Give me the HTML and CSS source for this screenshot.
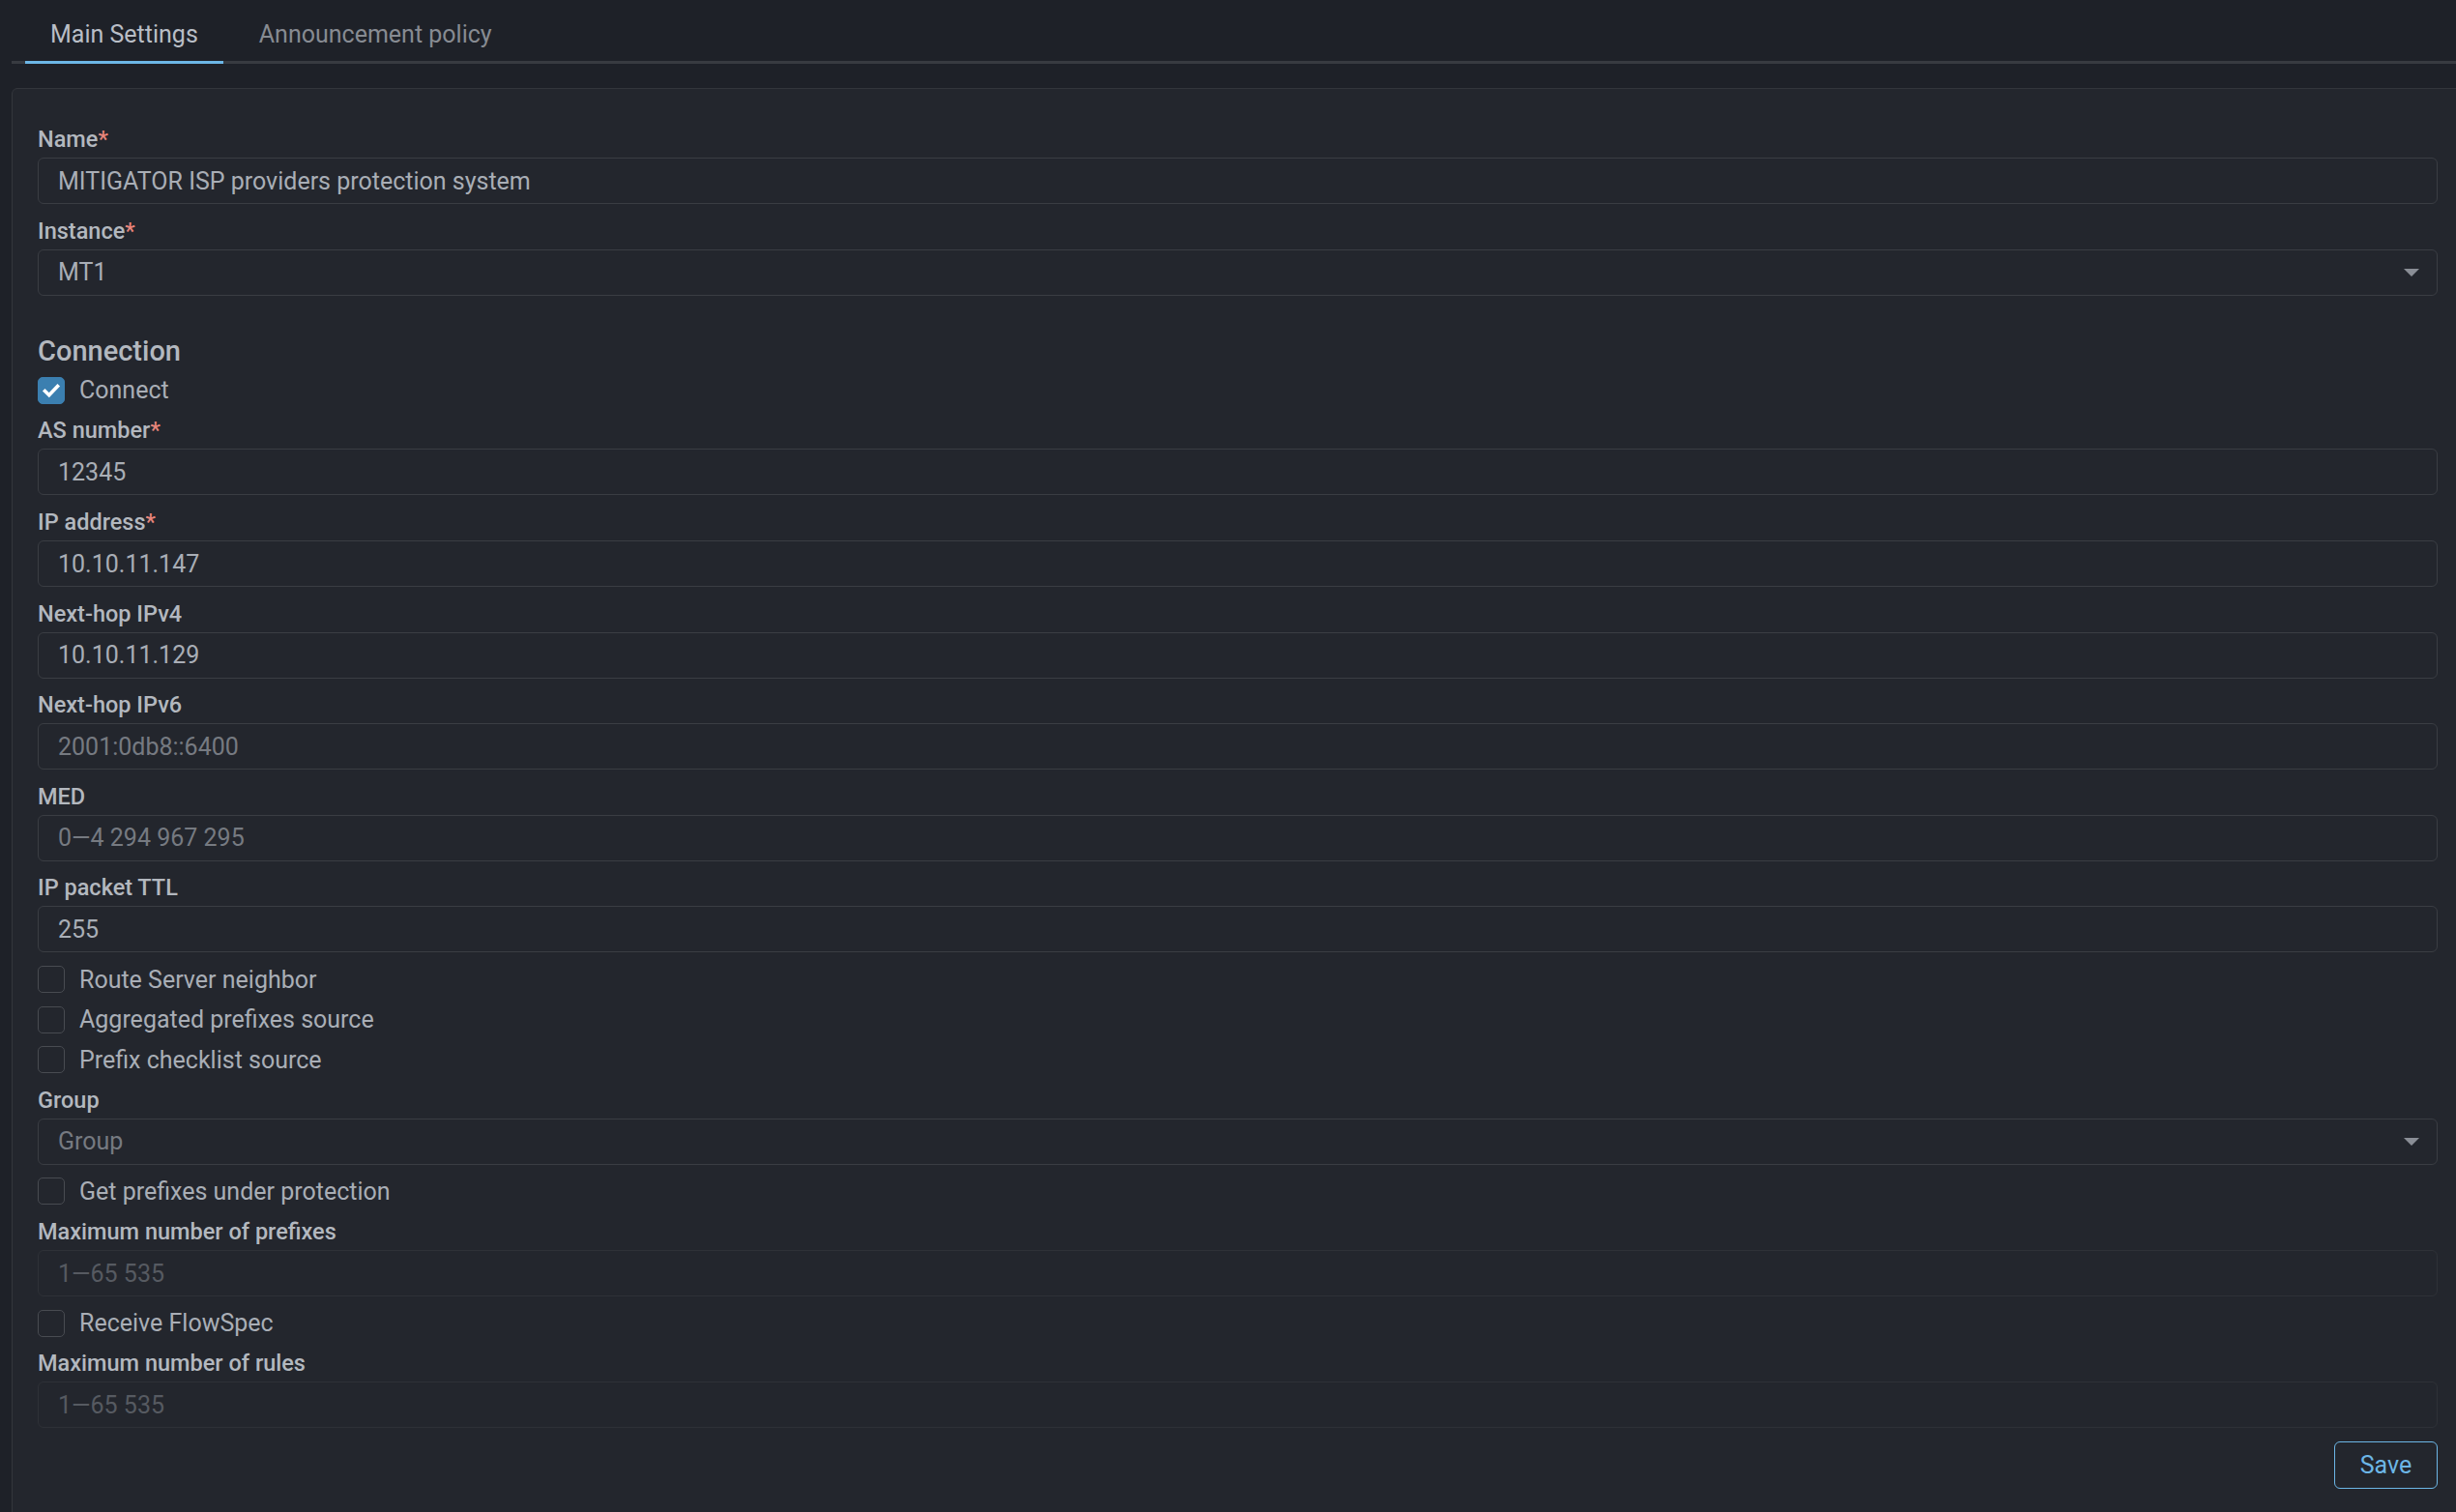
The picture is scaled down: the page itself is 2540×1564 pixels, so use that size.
FILE: index.html
```html
<!DOCTYPE html>
<html lang="en">
<head>
<meta charset="utf-8">
<title>Main Settings</title>
<link rel="stylesheet" href="styles.css">
</head>
<body>
<nav class="tabs">
  <div class="tab active">Main Settings</div>
  <div class="tab">Announcement policy</div>
</nav>
<section class="panel">
  <form class="form">
    <div class="field">
      <label class="label">Name<span class="req">*</span></label>
      <input class="input" type="text" value="MITIGATOR ISP providers protection system">
    </div>
    <div class="field">
      <label class="label">Instance<span class="req">*</span></label>
      <div class="input select"><span>MT1</span><svg class="caret" width="16" height="8" viewBox="0 0 16 8"><polygon points="0,0 16,0 8,8"/></svg></div>
    </div>

    <h3 class="heading">Connection</h3>
    <div class="check">
      <span class="box checked"><svg width="28" height="28" viewBox="0 0 28 28"><path d="M7.5 14.5l4.3 4.2 8.7-9.2" fill="none" stroke="#fff" stroke-width="3.6" stroke-linecap="square"/></svg></span>
      <span>Connect</span>
    </div>
    <div class="field">
      <label class="label">AS number<span class="req">*</span></label>
      <input class="input" type="text" value="12345">
    </div>
    <div class="field">
      <label class="label">IP address<span class="req">*</span></label>
      <input class="input" type="text" value="10.10.11.147">
    </div>
    <div class="field">
      <label class="label">Next-hop IPv4</label>
      <input class="input" type="text" value="10.10.11.129">
    </div>
    <div class="field">
      <label class="label">Next-hop IPv6</label>
      <input class="input" type="text" placeholder="2001:0db8::6400">
    </div>
    <div class="field">
      <label class="label">MED</label>
      <input class="input" type="text" placeholder="0—4 294 967 295">
    </div>
    <div class="field">
      <label class="label">IP packet TTL</label>
      <input class="input" type="text" value="255">
    </div>
    <div class="check"><span class="box"></span><span>Route Server neighbor</span></div>
    <div class="check"><span class="box"></span><span>Aggregated prefixes source</span></div>
    <div class="check"><span class="box"></span><span>Prefix checklist source</span></div>
    <div class="field">
      <label class="label">Group</label>
      <div class="input select"><span class="ph">Group</span><svg class="caret" width="16" height="8" viewBox="0 0 16 8"><polygon points="0,0 16,0 8,8"/></svg></div>
    </div>
    <div class="check"><span class="box"></span><span>Get prefixes under protection</span></div>
    <div class="field">
      <label class="label">Maximum number of prefixes</label>
      <input class="input disabled" type="text" placeholder="1—65 535" disabled>
    </div>
    <div class="check"><span class="box"></span><span>Receive FlowSpec</span></div>
    <div class="field">
      <label class="label">Maximum number of rules</label>
      <input class="input disabled" type="text" placeholder="1—65 535" disabled>
    </div>
    <div class="actions">
      <button type="button" class="btn">Save</button>
    </div>
  </form>
</section>
</body>
</html>
```

FILE: styles.css
```css
html, body {
  margin: 0;
  height: 100%;
  overflow: hidden;
  background: #1e2128;
}
body {
  font-family: Roboto, "Noto Sans", "Liberation Sans", sans-serif;
  color: #b3b8bf;
}
.tabs {
  display: flex;
  gap: 11px;
  margin-left: 12px;
  padding-left: 14px;
  border-bottom: 3px solid #383b41;
}
.tab {
  padding: 22px 26px 13px;
  font-size: 25px;
  line-height: 28px;
  color: #878b92;
  border-bottom: 3px solid transparent;
  margin-bottom: -3px;
}
.tab.active {
  color: #b9bec6;
  border-bottom-color: #6cb6e6;
}
.panel {
  margin: 25px -6px 0 12px;
  border: 1px solid #33363c;
  border-radius: 6px;
  background: #23262d;
  padding: 38px 24px 60px 26px;
}
.form {
  display: flex;
  flex-direction: column;
}
.field {
  margin-top: 13.6px;
}
.field:first-child {
  margin-top: 0;
}
.label {
  display: block;
  font-size: 23.5px;
  line-height: 28px;
  font-weight: 500;
  color: #b3b8bf;
  margin-bottom: 5px;
}
.req {
  color: #e8857b;
}
.input {
  display: block;
  width: 100%;
  height: 48px;
  box-sizing: border-box;
  border: 1px solid #3a3d43;
  border-radius: 6px;
  background: transparent;
  padding: 0 18px 0 20px;
  font-family: inherit;
  font-size: 25px;
  color: #a9aeb6;
  outline: none;
  margin: 0;
}
.input::placeholder {
  color: #767a81;
  opacity: 1;
}
.input.disabled {
  border-color: #2e3137;
}
.input.disabled::placeholder {
  color: #565a61;
}
.select {
  display: flex;
  align-items: center;
  justify-content: space-between;
}
.select .ph {
  color: #767a81;
}
.caret {
  fill: #8a8e96;
}
.heading {
  margin: 40px 0 -3.3px;
  font-size: 29px;
  line-height: 34px;
  font-weight: 500;
  color: #b3b8bf;
}
.check {
  display: flex;
  align-items: center;
  gap: 15px;
  height: 28px;
  margin-top: 13.6px;
  font-size: 25px;
  color: #a9aeb6;
}
.box {
  width: 28px;
  height: 28px;
  box-sizing: border-box;
  border: 1px solid #484b51;
  border-radius: 5px;
  flex: none;
  display: flex;
}
.box.checked {
  background: #3b7fb0;
  border-color: #3b7fb0;
}
.box.checked svg {
  margin: -1px;
}
.actions {
  display: flex;
  justify-content: flex-end;
  margin-top: 13.6px;
}
.btn {
  width: 107px;
  height: 49px;
  box-sizing: border-box;
  border: 1px solid #6cb6e6;
  border-radius: 6px;
  background: transparent;
  color: #6cb6e6;
  font-family: inherit;
  font-size: 25px;
  padding: 0;
}
```
